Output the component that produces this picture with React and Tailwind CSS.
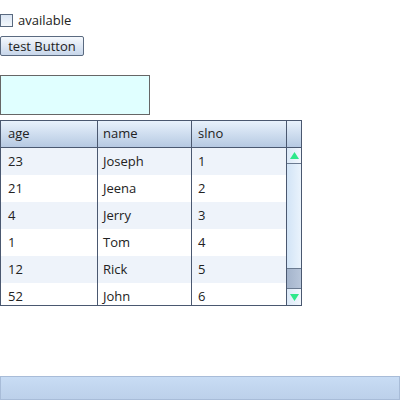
const rows = [
  { age: '23', name: 'Joseph', slno: '1' },
  { age: '21', name: 'Jeena', slno: '2' },
  { age: '4', name: 'Jerry', slno: '3' },
  { age: '1', name: 'Tom', slno: '4' },
  { age: '12', name: 'Rick', slno: '5' },
  { age: '52', name: 'John', slno: '6' },
];

export default function App() {
  return (
    <div className="relative w-[400px] h-[400px] bg-white text-[13px] text-[#222] overflow-hidden" style={{ fontFamily: '"Open Sans", "Noto Sans", sans-serif' }}>
      <div className="flex flex-col items-start pt-[13px]">
        {/* checkbox */}
        <label className="flex items-center h-[14px]">
          <span className="w-[13px] h-[13px] border border-[#5a6a80] bg-gradient-to-b from-[#dbe6f4] to-[#f4f8fc]" />
          <span className="ml-[5px] leading-none">available</span>
        </label>

        {/* button */}
        <button className="mt-[9px] h-[20px] w-[84px] border border-[#5a6a80] rounded-[2px] bg-gradient-to-b from-[#f6f9fd] to-[#c7d6ea] leading-none text-[#222]">
          test Button
        </button>

        {/* text field */}
        <div className="mt-[19px] w-[150px] h-[40px] border border-[#666] bg-[#e0ffff]" />

        {/* table */}
        <div className="mt-[5px] w-[302px] border border-[#4a5870] bg-white">
          <div className="flex h-[27px] bg-gradient-to-b from-[#e8f2fc] to-[#b6c9e2] border-b border-[#4a5870]">
            <div className="w-[97px] border-r border-[#4a5870] pl-[7px] flex items-center">age</div>
            <div className="w-[94px] border-r border-[#4a5870] pl-[5px] flex items-center">name</div>
            <div className="w-[95px] border-r border-[#4a5870] pl-[6px] flex items-center">slno</div>
            <div className="flex-1" />
          </div>
          <div className="flex h-[157px] overflow-hidden">
            <div className="w-[286px]">
              {rows.map((r, i) => (
                <div key={r.slno} className={`flex h-[27px] ${i % 2 === 0 ? 'bg-[#eef3fa]' : 'bg-white'}`}>
                  <div className="w-[97px] border-r border-[#4a5870] pl-[7px] flex items-center">{r.age}</div>
                  <div className="w-[94px] border-r border-[#4a5870] pl-[5px] flex items-center">{r.name}</div>
                  <div className="w-[95px] border-r border-[#4a5870] pl-[6px] flex items-center">{r.slno}</div>
                </div>
              ))}
            </div>
            {/* scrollbar */}
            <div className="flex-1 flex flex-col bg-gradient-to-r from-[#d2e4f6] to-[#eaf3fc]">
              <div className="h-[16px] flex items-center justify-center border-b border-[#6a7a90] bg-gradient-to-r from-[#dce9f7] to-[#f2f7fd]">
                <svg width="9" height="7" viewBox="0 0 9 7"><path d="M4.5 0 L9 7 L0 7 Z" fill="#2ee88a" /></svg>
              </div>
              <div className="flex-1" />
              <div className="h-[21px] border-y border-[#6a7a90] bg-gradient-to-r from-[#a4b4cc] to-[#b8c6da]" />
              <div className="h-[16px] flex items-center justify-center bg-gradient-to-r from-[#dce9f7] to-[#f2f7fd]">
                <svg width="9" height="7" viewBox="0 0 9 7"><path d="M0 0 L9 0 L4.5 7 Z" fill="#2ee88a" /></svg>
              </div>
            </div>
          </div>
        </div>
      </div>

      {/* bottom status bar */}
      <div className="absolute left-0 bottom-0 w-[400px] h-[24px] border border-[#a8bcd8] bg-gradient-to-b from-[#c8dcf4] to-[#bcd0ea]" />
    </div>
  );
}
